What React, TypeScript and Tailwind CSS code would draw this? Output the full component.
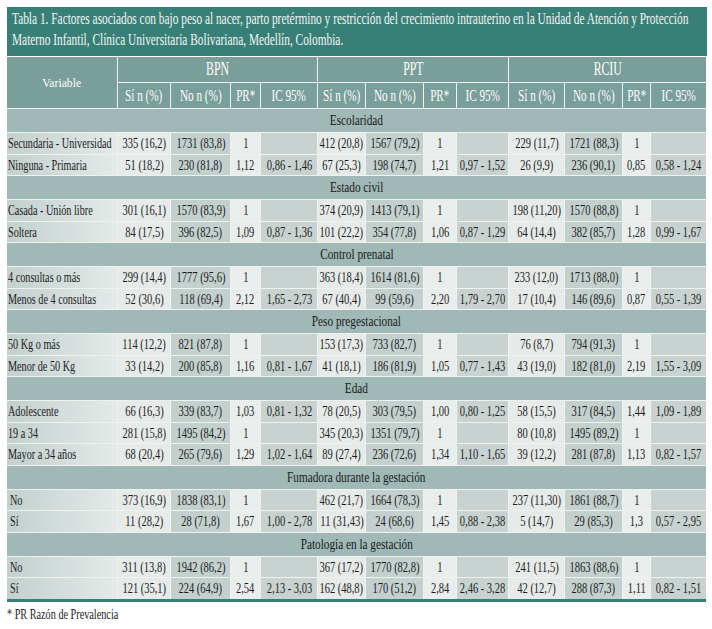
import React from "react";

type Sec = { title: string; rows: string[][] };

const data: Sec[] = [
  {
    title: "Escolaridad",
    rows: [
      ["Secundaria - Universidad", "335 (16,2)", "1731 (83,8)", "1", "", "412 (20,8)", "1567 (79,2)", "1", "", "229 (11,7)", "1721 (88,3)", "1", ""],
      ["Ninguna - Primaria", "51 (18,2)", "230 (81,8)", "1,12", "0,86 - 1,46", "67 (25,3)", "198 (74,7)", "1,21", "0,97 - 1,52", "26 (9,9)", "236 (90,1)", "0,85", "0,58 - 1,24"],
    ],
  },
  {
    title: "Estado civil",
    rows: [
      ["Casada - Unión libre", "301 (16,1)", "1570 (83,9)", "1", "", "374 (20,9)", "1413 (79,1)", "1", "", "198 (11,20)", "1570 (88,8)", "1", ""],
      ["Soltera", "84 (17,5)", "396 (82,5)", "1,09", "0,87 - 1,36", "101 (22,2)", "354 (77,8)", "1,06", "0,87 - 1,29", "64 (14,4)", "382 (85,7)", "1,28", "0,99 - 1,67"],
    ],
  },
  {
    title: "Control prenatal",
    rows: [
      ["4 consultas o más", "299 (14,4)", "1777 (95,6)", "1", "", "363 (18,4)", "1614 (81,6)", "1", "", "233 (12,0)", "1713 (88,0)", "1", ""],
      ["Menos de 4 consultas", "52 (30,6)", "118 (69,4)", "2,12", "1,65 - 2,73", "67 (40,4)", "99 (59,6)", "2,20", "1,79 - 2,70", "17 (10,4)", "146 (89,6)", "0,87", "0,55 - 1,39"],
    ],
  },
  {
    title: "Peso pregestacional",
    rows: [
      ["50 Kg o más", "114 (12,2)", "821 (87,8)", "1", "", "153 (17,3)", "733 (82,7)", "1", "", "76 (8,7)", "794 (91,3)", "1", ""],
      ["Menor de 50 Kg", "33 (14,2)", "200 (85,8)", "1,16", "0,81 - 1,67", "41 (18,1)", "186 (81,9)", "1,05", "0,77 - 1,43", "43 (19,0)", "182 (81,0)", "2,19", "1,55 - 3,09"],
    ],
  },
  {
    title: "Edad",
    rows: [
      ["Adolescente", "66 (16,3)", "339 (83,7)", "1,03", "0,81 - 1,32", "78 (20,5)", "303 (79,5)", "1,00", "0,80 - 1,25", "58 (15,5)", "317 (84,5)", "1,44", "1,09 - 1,89"],
      ["19 a 34", "281 (15,8)", "1495 (84,2)", "1", "", "345 (20,3)", "1351 (79,7)", "1", "", "80 (10,8)", "1495 (89,2)", "1", ""],
      ["Mayor a 34 años", "68 (20,4)", "265 (79,6)", "1,29", "1,02 - 1,64", "89 (27,4)", "236 (72,6)", "1,34", "1,10 - 1,65", "39 (12,2)", "281 (87,8)", "1,13", "0,82 - 1,57"],
    ],
  },
  {
    title: "Fumadora durante la gestación",
    rows: [
      ["No", "373 (16,9)", "1838 (83,1)", "1", "", "462 (21,7)", "1664 (78,3)", "1", "", "237 (11,30)", "1861 (88,7)", "1", ""],
      ["Sí", "11 (28,2)", "28 (71,8)", "1,67", "1,00 - 2,78", "11 (31,43)", "24 (68,6)", "1,45", "0,88 - 2,38", "5 (14,7)", "29 (85,3)", "1,3", "0,57 - 2,95"],
    ],
  },
  {
    title: "Patología en la gestación",
    rows: [
      ["No", "311 (13,8)", "1942 (86,2)", "1", "", "367 (17,2)", "1770 (82,8)", "1", "", "241 (11,5)", "1863 (88,6)", "1", ""],
      ["Sí", "121 (35,1)", "224 (64,9)", "2,54", "2,13 - 3,03", "162 (48,8)", "170 (51,2)", "2,84", "2,46 - 3,28", "42 (12,7)", "288 (87,3)", "1,11", "0,82 - 1,51"],
    ],
  },
];

const colBg = ["bg-[#e6eae9]", "bg-[#c3d0ce]", "bg-[#e9edec]", "bg-[#c8d3d1]"];

function Txt({ c, children }: { c: string; children: React.ReactNode }) {
  return <span className={"inline-block whitespace-nowrap " + c}>{children}</span>;
}

const groups = ["BPN", "PPT", "RCIU"];
const subs = ["Sí n (%)", "No n (%)", "PR*", "IC 95%"];

export default function App() {
  return (
    <div className="w-[712px] h-[629px] bg-white pt-[7px] pl-[7px] [font-family:'Liberation_Serif','Times_New_Roman',serif] overflow-hidden">
      <div className="w-[700px] h-[49px] bg-[#388077] text-[#f4f4f4] pl-[5px] pt-[1px] text-[16px] leading-[21px]">
        <div>
          <Txt c="scale-x-[0.71] origin-left">
            Tabla 1. Factores asociados con bajo peso al nacer, parto pretérmino y restricción del crecimiento intrauterino en la Unidad de Atención y Protección
          </Txt>
        </div>
        <div>
          <Txt c="scale-x-[0.71] origin-left">
            Materno Infantil, Clínica Universitaria Bolivariana, Medellín, Colombia.
          </Txt>
        </div>
      </div>
      <div className="mt-px w-[699px] grid gap-px bg-[#eef2f1] grid-cols-[110px_52px_59px_29px_56px_47px_57px_32px_51px_55px_57px_27px_55px]">
        <div className="row-span-2 bg-[#7a9e99] text-white text-[13px] flex items-center justify-center">
          <Txt c="scale-x-[0.9] origin-center">Variable</Txt>
        </div>
        {groups.map((g) => (
          <div key={g} className="col-span-4 h-[25px] bg-[#7a9e99] text-white text-[19px] flex items-center justify-center">
            <Txt c="scale-x-[0.62] origin-center">{g}</Txt>
          </div>
        ))}
        {groups.map((g) =>
          subs.map((s) => (
            <div key={g + s} className="h-[25px] bg-[#7a9e99] text-white text-[16px] flex items-center justify-center">
              <Txt c="scale-x-[0.7] origin-center">{s}</Txt>
            </div>
          ))
        )}
        {data.map((sec) => (
          <React.Fragment key={sec.title}>
            <div className="col-span-full h-[23px] bg-[#a0b9b6] text-[#1a1a1a] text-[15px] flex items-center justify-center">
              <Txt c="scale-x-[0.75] origin-center">{sec.title}</Txt>
            </div>
            {sec.rows.map((r, ri) => (
              <React.Fragment key={sec.title + ri}>
                <div
                  className={
                    "h-[20.5px] bg-gradient-to-r from-[#c3d0ce] to-[#e4eae9] text-[#1c1c1c] text-[15px] flex items-center " +
                    (r[0].length <= 2 ? "pl-[3px]" : "pl-[1px]")
                  }
                >
                  <Txt c="scale-x-[0.68] origin-left">{r[0]}</Txt>
                </div>
                {r.slice(1).map((v, i) => (
                  <div
                    key={i}
                    className={"h-[20.5px] text-[#1c1c1c] text-[15px] flex items-center justify-center " + colBg[i % 4]}
                  >
                    <Txt c="scale-x-[0.7] origin-center">{v}</Txt>
                  </div>
                ))}
              </React.Fragment>
            ))}
          </React.Fragment>
        ))}
      </div>
      <div className="w-[699px] h-[3px] bg-[#388077]" />
      <div className="mt-[4px] text-[14px] leading-[17px] text-[#1c1c1c]">
        <Txt c="scale-x-[0.73] origin-left">* PR Razón de Prevalencia</Txt>
      </div>
    </div>
  );
}
